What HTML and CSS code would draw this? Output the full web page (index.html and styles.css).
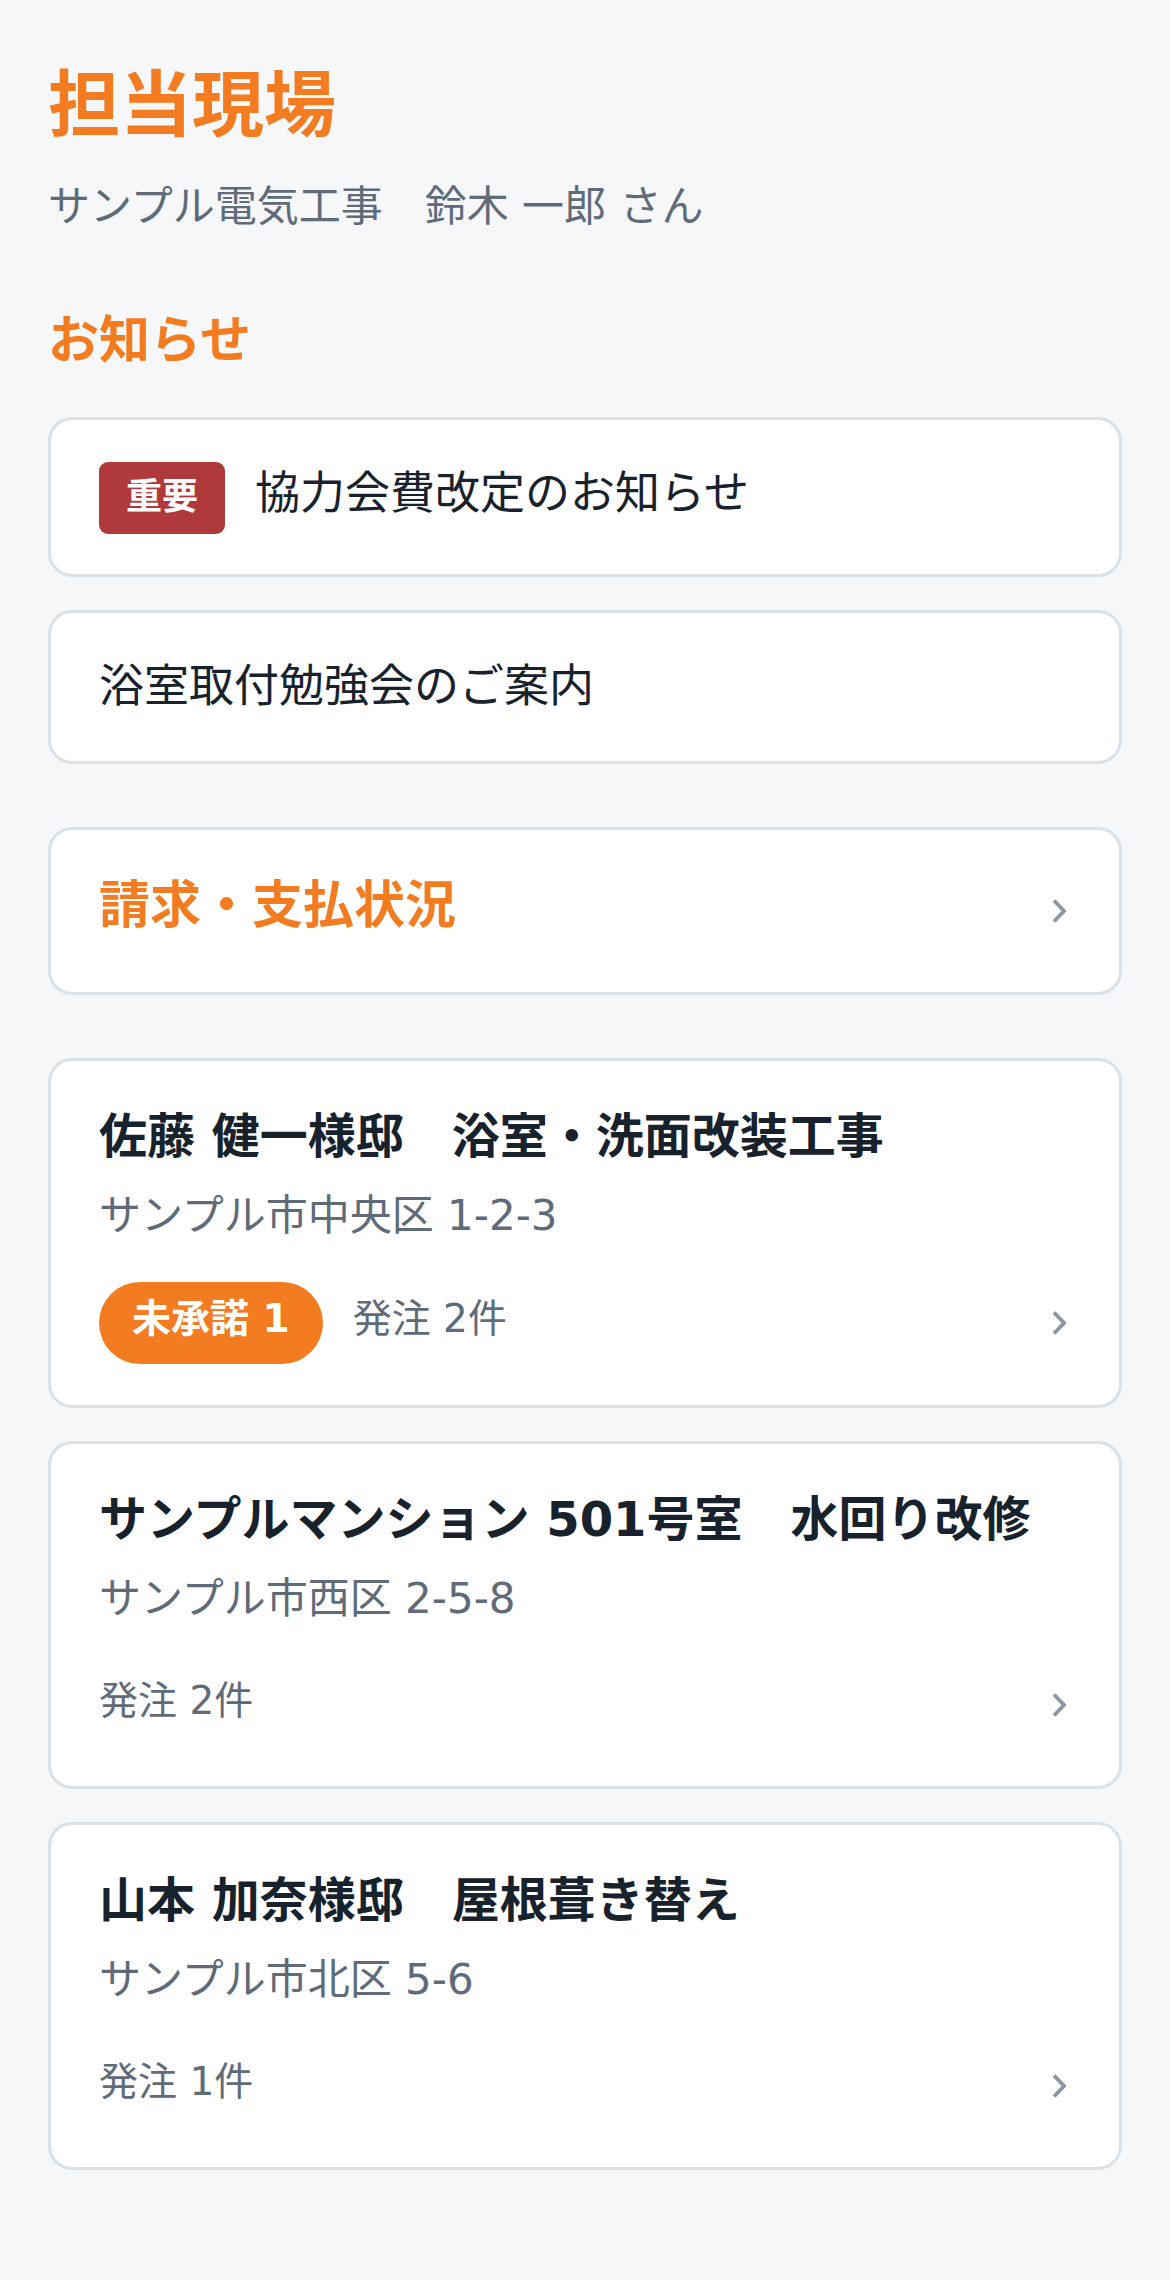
FILE: index.html
```html
<!DOCTYPE html>
<html lang="ja">
<head>
	<meta charset="UTF-8">
	<title>担当現場</title>
	<link rel="stylesheet" href="styles.css">
</head>
<body>
<div class="page">

	<h1 class="page-title">担当現場</h1>
	<p class="page-user">サンプル電気工事　鈴木 一郎 さん</p>

	<h2 class="section-title">お知らせ</h2>
	<ul class="notice-list">
		<li class="notice-card">
			<span class="badge-important">重要</span>
			<span class="notice-text">協力会費改定のお知らせ</span>
		</li>
		<li class="notice-card">
			<span class="notice-text">浴室取付勉強会のご案内</span>
		</li>
	</ul>

	<a class="billing-card" href="#">
		<span class="billing-text">請求・支払状況</span>
		<svg class="chevron" viewBox="0 0 14 24"><polyline points="2,1.5 12,12 2,22.5"/></svg>
	</a>

	<ul class="site-list">
		<li class="site-card">
			<div class="site-name">佐藤 健一様邸　浴室・洗面改装工事</div>
			<div class="site-address">サンプル市中央区 1-2-3</div>
			<div class="site-meta">
				<span class="badge-pending">未承諾 1</span>
				<span class="order-count">発注 2件</span>
				<svg class="chevron" viewBox="0 0 14 24"><polyline points="2,1.5 12,12 2,22.5"/></svg>
			</div>
		</li>
		<li class="site-card">
			<div class="site-name">サンプルマンション 501号室　水回り改修</div>
			<div class="site-address">サンプル市西区 2-5-8</div>
			<div class="site-meta">
				<span class="order-count">発注 2件</span>
				<svg class="chevron" viewBox="0 0 14 24"><polyline points="2,1.5 12,12 2,22.5"/></svg>
			</div>
		</li>
		<li class="site-card">
			<div class="site-name">山本 加奈様邸　屋根葺き替え</div>
			<div class="site-address">サンプル市北区 5-6</div>
			<div class="site-meta">
				<span class="order-count">発注 1件</span>
				<svg class="chevron" viewBox="0 0 14 24"><polyline points="2,1.5 12,12 2,22.5"/></svg>
			</div>
		</li>
	</ul>

</div>
</body>
</html>
```

FILE: styles.css
```css
:root {
	--color-bg: #f6f7f9;
	--color-card: #fff;
	--color-border: #d9e1e9;
	--color-accent: #f37c21;
	--color-danger: #b0393b;
	--color-text: #18222c;
	--color-text-sub: #5f6b78;
	--color-chevron: #8d95a3;
	font-family: "DejaVu Sans", "Noto Sans CJK JP", sans-serif;
}

body {
	margin: 0;
	background-color: var(--color-bg);
	color: var(--color-text);
}

.page {
	padding: 60px 48px 100px;
}

.page-title {
	margin: 0;
	font-size: 72px;
	line-height: 90px;
	font-weight: 700;
	color: var(--color-accent);
}

.page-user {
	margin: 25px 0 0;
	font-size: 42px;
	line-height: 63px;
	color: var(--color-text-sub);
}

.section-title {
	margin: 67px 0 0;
	font-size: 51px;
	line-height: 72px;
	font-weight: 700;
	color: var(--color-accent);
}

/* cards */
.notice-list, .site-list {
	list-style: none;
	margin: 0;
	padding: 0;
	display: flex;
	flex-direction: column;
	gap: 33px;
}
.notice-list {
	margin-top: 40px;
}
.site-list {
	margin-top: 63px;
}

.notice-card, .billing-card, .site-card {
	background-color: var(--color-card);
	border: 3px solid var(--color-border);
	border-radius: 24px;
}

.notice-card {
	display: flex;
	align-items: baseline;
	gap: 30px;
	padding: 40px 48px;
}
.notice-text {
	font-size: 45px;
	line-height: 67.5px;
}
.badge-important {
	padding: 8px 27px 10px;
	border-radius: 9px;
	background-color: var(--color-danger);
	color: #fff;
	font-size: 36px;
	line-height: 54px;
	font-weight: 700;
}

.billing-card {
	display: flex;
	align-items: center;
	justify-content: space-between;
	margin-top: 63px;
	padding: 38px 48px;
	text-decoration: none;
}
.billing-text {
	padding-bottom: 9.5px;
	font-size: 51px;
	line-height: 76.5px;
	font-weight: 700;
	color: var(--color-accent);
}

.chevron {
	width: 14px;
	height: 24px;
	margin-right: 5px;
	flex-shrink: 0;
	fill: none;
	stroke: var(--color-chevron);
	stroke-width: 3.8;
}

.site-card {
	padding: 39px 48px 41px;
}
.site-name {
	font-size: 48px;
	line-height: 72px;
	font-weight: 700;
	white-space: nowrap;
}
.site-address {
	margin-top: 12px;
	font-size: 42px;
	line-height: 63px;
	color: var(--color-text-sub);
}
.site-meta {
	display: flex;
	align-items: center;
	gap: 30px;
	min-height: 80px;
	margin-top: 35px;
}
.site-meta .chevron {
	margin-left: auto;
}
.badge-pending {
	padding: 8px 33px 16px;
	border-radius: 42px;
	background-color: var(--color-accent);
	color: #fff;
	font-size: 39px;
	line-height: 58.5px;
	font-weight: 700;
}
.order-count {
	padding-bottom: 8px;
	font-size: 39px;
	line-height: 58.5px;
	color: var(--color-text-sub);
}
```
